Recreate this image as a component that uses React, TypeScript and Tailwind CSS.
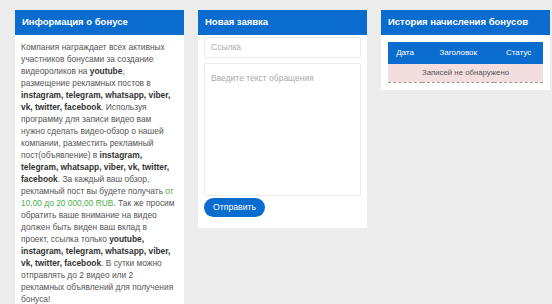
import React from "react";

const B = ({ children }: { children: React.ReactNode }) => (
  <b className="font-bold text-[#333]">{children}</b>
);

function Header({ title }: { title: string }) {
  return (
    <div className="h-[25px] bg-[#0a6ccf] px-[7px] flex items-center text-white font-bold text-[9.5px] whitespace-nowrap">
      {title}
    </div>
  );
}

export default function App() {
  const lines: React.ReactNode[] = [
    <>Компания награждает всех активных</>,
    <>участников бонусами за создание</>,
    <>видеороликов на <B>youtube</B>,</>,
    <>размещение рекламных постов в</>,
    <><B>instagram, telegram, whatsapp, viber,</B></>,
    <><B>vk, twitter, facebook</B>. Используя</>,
    <>программу для записи видео вам</>,
    <>нужно сделать видео-обзор о нашей</>,
    <>компании, разместить рекламный</>,
    <>пост(объявление) в <B>instagram,</B></>,
    <><B>telegram, whatsapp, viber, vk, twitter,</B></>,
    <><B>facebook</B>. За каждый ваш обзор,</>,
    <>рекламный пост вы будете получать <span className="text-[#4cae4c]">от</span></>,
    <><span className="text-[#4cae4c]">10,00 до 20 000,00 RUB</span>. Так же просим</>,
    <>обратить ваше внимание на видео</>,
    <>должен быть виден ваш вклад в</>,
    <>проект, ссылка только <B>youtube,</B></>,
    <><B>instagram, telegram, whatsapp, viber,</B></>,
    <><B>vk, twitter, facebook</B>. В сутки можно</>,
    <>отправлять до 2 видео или 2</>,
    <>рекламных объявлений для получения</>,
    <>бонуса!</>,
  ];

  return (
    <div
      className="w-[552px] h-[304px] overflow-hidden bg-[#ececec] pl-[15px] pt-[10px] flex items-start gap-[14px]"
      style={{ fontFamily: '"Liberation Sans", Arial, sans-serif' }}
    >
      {/* Panel 1 */}
      <div className="w-[169px] shrink-0 bg-white">
        <Header title="Информация о бонусе" />
        <div className="px-[6px] pt-[6px] pb-[8px] text-[8.4px] leading-[12px] text-[#555]">
          {lines.map((l, i) => (
            <div key={i} className="whitespace-nowrap">
              {l}
            </div>
          ))}
        </div>
      </div>

      {/* Panel 2 */}
      <div className="w-[169px] shrink-0 bg-white">
        <Header title="Новая заявка" />
        <div className="px-[6px] pt-[2px] pb-[11px] flex flex-col">
          <div className="h-[21px] border border-[#ebebeb] rounded-[2px] px-[6px] flex items-center text-[8.5px] text-[#aaa]">
            Ссылка
          </div>
          <div className="mt-[5px] h-[133px] border border-[#ebebeb] rounded-[2px] px-[6px] pt-[8px] text-[8.5px] text-[#aaa]">
            Введите текст обращения
          </div>
          <button className="mt-[2px] w-[61px] h-[19px] rounded-full bg-[#0a6ccf] text-white text-[8.7px] flex items-center justify-center">
            Отправить
          </button>
        </div>
      </div>

      {/* Panel 3 */}
      <div className="w-[169px] shrink-0 bg-white">
        <Header title="История начисления бонусов" />
        <div className="px-[7px] pt-[7px] pb-[7px]">
          <table className="w-full border-collapse text-[8px]">
            <thead>
              <tr className="bg-[#0a6ccf] text-white h-[22px]">
                <th className="font-normal">Дата</th>
                <th className="font-normal">Заголовок</th>
                <th className="font-normal">Статус</th>
              </tr>
            </thead>
            <tbody>
              <tr className="bg-[#f2dede] h-[18px] border-b border-dashed border-[#999]">
                <td colSpan={3} className="text-center text-[#555] text-[7.8px]">
                  Записей не обнаружено
                </td>
              </tr>
            </tbody>
          </table>
        </div>
      </div>
    </div>
  );
}
